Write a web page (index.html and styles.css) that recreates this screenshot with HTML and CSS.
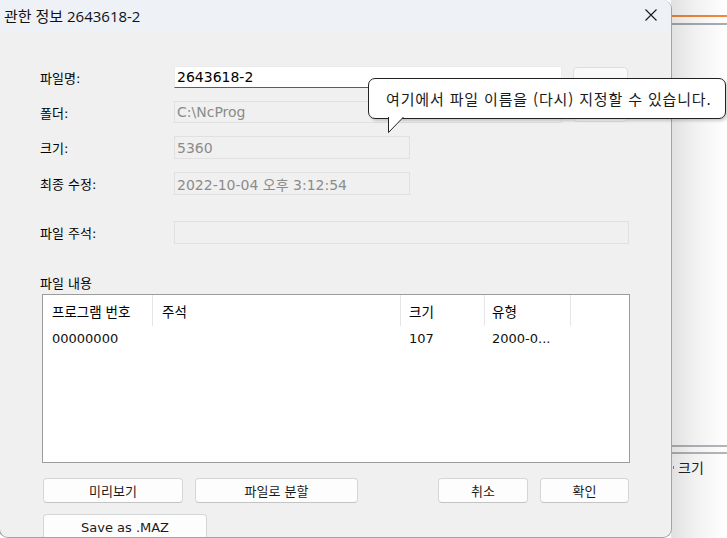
FILE: index.html
```html
<!DOCTYPE html>
<html lang="ko">
<head>
<meta charset="utf-8">
<title>관한 정보</title>
<link rel="stylesheet" href="styles.css">
</head>
<body>
<div class="desk">
  <div class="backwin">
    <div class="bw-orange"></div>
    <div class="bw-gray"></div>
    <div class="bw-line1"></div>
    <div class="bw-line2"></div>
    <div class="bw-head"><span class="bw-sep"></span><span class="bw-text">크기</span></div>
    <div class="bw-shade"></div>
  </div>

  <div class="dialog">
    <div class="titlebar">
      <span class="title">관한 정보 2643618-2</span>
      <svg class="close" width="12" height="12" viewBox="0 0 12 12"><path d="M0.5 0.5 L11.5 11.5 M11.5 0.5 L0.5 11.5" stroke="#1a1a1a" stroke-width="1.1" fill="none"/></svg>
    </div>
    <div class="body">
      <div class="form">
        <div class="lbl r1">파일명:</div>
        <div class="input r1">2643618-2</div>
        <div class="browse"></div>
        <div class="lbl r2">폴더:</div>
        <div class="field r2 wide">C:\NcProg</div>
        <div class="lbl r3">크기:</div>
        <div class="field r3">5360</div>
        <div class="lbl r4">최종 수정:</div>
        <div class="field r4">2022-10-04 오후 3:12:54</div>
      </div>
      <div class="comment-row">
        <div class="lbl">파일 주석:</div>
        <div class="field comment"></div>
      </div>
      <div class="section">파일 내용</div>
      <div class="list">
        <div class="lrow head">
          <div class="c1">프로그램 번호</div>
          <div class="c2">주석</div>
          <div class="c3">크기</div>
          <div class="c4">유형</div>
        </div>
        <div class="lrow data">
          <div class="c1">00000000</div>
          <div class="c2"></div>
          <div class="c3">107</div>
          <div class="c4">2000-0...</div>
        </div>
      </div>
      <div class="btnrow">
        <button class="btn b-prev">미리보기</button>
        <button class="btn b-split">파일로 분할</button>
        <button class="btn b-cancel">취소</button>
        <button class="btn b-ok">확인</button>
      </div>
      <div class="btnrow2">
        <button class="btn b-save">Save as .MAZ</button>
      </div>
    </div>
  </div>

  <div class="tooltip">
    <span class="tip-text">여기에서 파일 이름을 (다시) 지정할 수 있습니다.</span>
    <svg class="tail" width="18" height="17" viewBox="0 0 18 17"><path d="M0.5 0 L0.5 15.5 L15.5 0" fill="#fff" stroke="#222" stroke-width="1"/></svg>
  </div>
</div>
</body>
</html>
```

FILE: styles.css
```css
* { box-sizing: border-box; }
html, body { margin: 0; padding: 0; }
body {
  width: 727px;
  height: 538px;
  overflow: hidden;
  background: #ffffff;
  font-family: "DejaVu Sans", "Noto Sans CJK KR", sans-serif;
  color: #111;
}
.desk { position: relative; width: 727px; height: 538px; overflow: hidden; }

/* window behind the dialog */
.backwin { position: absolute; left: 600px; top: 0; width: 127px; height: 538px; background: #fff; }
.bw-orange { position: absolute; left: 0; right: 0; top: 15px; height: 2px; background: #f2893c; }
.bw-gray { position: absolute; left: 0; right: 0; top: 23px; height: 2px; background: #a9acb0; }
.bw-line1 { position: absolute; left: 0; right: 0; top: 445px; height: 2px; background: #b3b6ba; }
.bw-line2 { position: absolute; left: 0; right: 0; top: 452px; height: 2px; background: #b3b6ba; }
.bw-head { position: absolute; left: 73px; top: 457px; height: 20px; display: flex; align-items: center; gap: 4px; }
.bw-sep { width: 1px; height: 3px; background: #7a8aa0; }
.bw-text { font-family: "Noto Sans CJK KR", sans-serif; font-size: 14px; color: #222; }
.bw-shade { position: absolute; left: 71px; top: 0; width: 56px; height: 538px;
  background: linear-gradient(90deg, rgba(0,0,0,0.12) 0, rgba(0,0,0,0.06) 22px, rgba(0,0,0,0.02) 45px, rgba(0,0,0,0) 56px); }

/* dialog */
.dialog {
  position: absolute; left: -1px; top: 0; width: 673px; height: 538px;
  background: #f0f0f0;
  border: 1px solid #a4a4a4;
  border-top: none;
  border-radius: 0 9px 9px 9px;
  overflow: hidden;
}
.titlebar { height: 31px; background: #eef2f7; display: flex; align-items: center; padding-left: 4px; position: relative; }
.title { font-family: "Open Sans", "Noto Sans CJK KR", sans-serif; font-size: 15px; color: #111; }
.close { position: absolute; left: 645px; top: 9px; }

.body { padding-left: 40px; }
.lbl { font-size: 13px; color: #000; display: flex; align-items: center; }

.form {
  margin-top: 35px;
  display: grid;
  grid-template-columns: 134px 388px 11px 55px;
  grid-template-rows: 22px 22px 23px 23px;
  row-gap: 13px;
}
.r1 { grid-row: 1; } .r2 { grid-row: 2; } .r3 { grid-row: 3; } .r4 { grid-row: 4; }
.lbl.r1, .lbl.r2, .lbl.r3, .lbl.r4 { grid-column: 1; }
.input {
  grid-column: 2;
  background: #fff;
  border: 1px solid #ececec;
  border-bottom: 1px solid #5c5c5c;
  font-size: 14px; color: #000;
  display: flex; align-items: center; padding-left: 2px;
}
.browse {
  grid-column: 4; grid-row: 1 / 3;
  margin-top: 1px; margin-bottom: 1px;
  background: #f9f9f9;
  border: 1px solid #dedede;
  border-radius: 4px;
}
.field {
  grid-column: 2;
  width: 236px;
  background: #f0f0f0;
  border: 1px solid #e0e0e0;
  font-size: 14px; color: #8b8b8b;
  display: flex; align-items: center; padding-left: 2px;
}
.field.wide { width: 388px; }

.comment-row { margin-top: 26px; height: 23px; display: grid; grid-template-columns: 134px 455px; }
.field.comment { width: 455px; }

.section { margin-top: 30px; height: 16px; font-size: 13px; color: #000; display: flex; align-items: center; }

.list {
  margin-top: 4px; margin-left: 2px;
  width: 588px; height: 169px;
  background: #fff;
  border: 1px solid #9c9c9c;
  font-size: 13px;
}
.lrow { display: grid; grid-template-columns: 110px 248px 84px 86px; }
.lrow.head { height: 31px; }
.lrow.head > div { display: flex; align-items: center; border-right: 1px solid #e6e6e6; font-family: "Noto Sans CJK KR", sans-serif; font-size: 13.5px; color: #000; }
.lrow.data { height: 24px; margin-top: 0; }
.lrow.data > div { display: flex; align-items: center; font-size: 13px; color: #111; }
.c1 { padding-left: 9px; }
.c2 { padding-left: 9px; }
.c3 { padding-left: 8px; }
.c4 { padding-left: 7px; }

.btn {
  height: 25px;
  background: #fdfdfd;
  border: 1px solid #d6d6d6;
  border-bottom-color: #c4c4c4;
  border-radius: 4px;
  font-family: "DejaVu Sans", "Noto Sans CJK KR", sans-serif;
  font-size: 13px; color: #1a1a1a;
  padding: 0;
  margin: 0;
}
.btnrow { margin-top: 15px; display: flex; padding-left: 3px; }
.b-prev { width: 140px; }
.b-split { width: 163px; margin-left: 12px; }
.b-cancel { width: 90px; margin-left: 80px; }
.b-ok { width: 89px; margin-left: 12px; }
.btnrow2 { margin-top: 11px; padding-left: 3px; }
.b-save { width: 164px; height: 26px; }

/* tooltip */
.tooltip {
  position: absolute; left: 368px; top: 78px; width: 358px; height: 41px;
  background: #fff;
  border: 1px solid #222;
  border-radius: 7px;
  box-shadow: 2px 2px 3px rgba(0,0,0,0.18);
  display: flex; align-items: center; padding-left: 17px;
}
.tip-text { font-family: "Noto Sans CJK KR", sans-serif; font-size: 15px; letter-spacing: 0.85px; color: #1a1a1a; }
.tail { position: absolute; left: 19px; top: 38px; }
```
